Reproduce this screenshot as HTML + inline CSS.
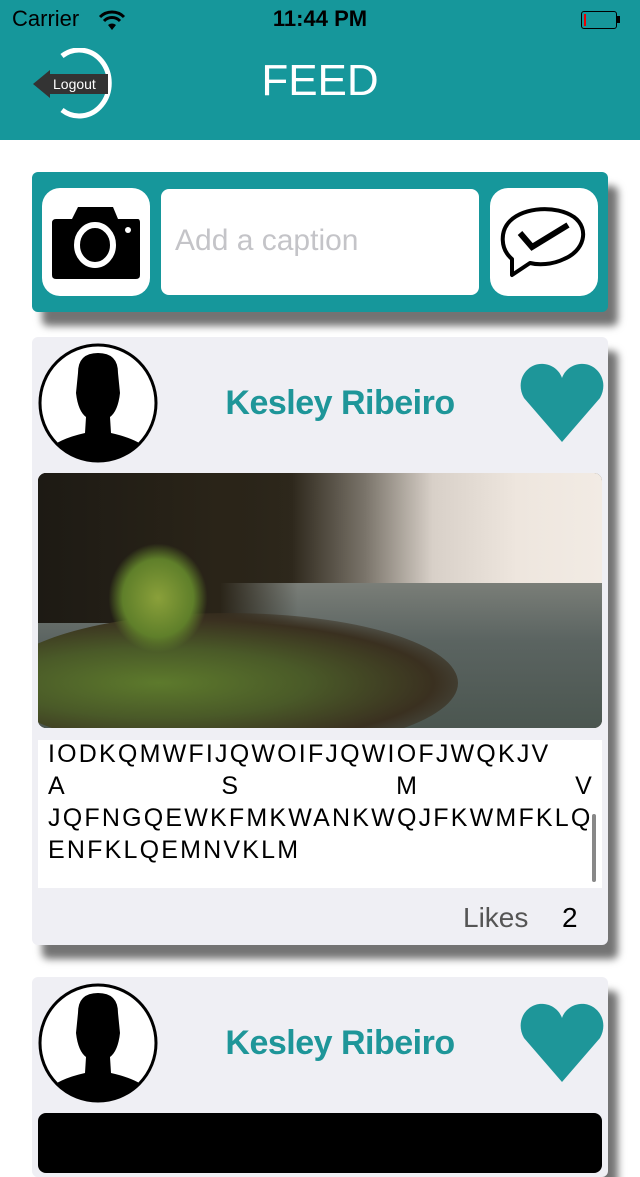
<!DOCTYPE html>
<html><head><meta charset="utf-8"><style>
body{margin:0;width:640px;height:1136px;overflow:hidden;background:#fff;font-family:"Liberation Sans",sans-serif;position:relative}
.abs{position:absolute}
.hdr{left:0;top:0;width:640px;height:140px;background:#16979b}
.card{background:#efeff4;border-radius:6px;box-shadow:10px 14px 8px rgba(0,0,0,.55)}
.name{color:#1e9699;font-weight:bold;font-size:34px;text-align:center;width:300px;letter-spacing:-0.5px}
.txt{font-size:25px;color:#000;letter-spacing:2.2px;line-height:32px}
</style></head><body>
<div class="abs hdr"></div>
<div class="abs" style="left:12px;top:6px;font-size:22px;color:#000">Carrier</div>
<svg class="abs" style="left:98px;top:9px" width="28" height="22" viewBox="0 0 28 22"><path d="M2 8 A17 17 0 0 1 26 8" stroke="#000" stroke-width="3" fill="none"/><path d="M6 12 A11 11 0 0 1 22 12" stroke="#000" stroke-width="3" fill="none"/><path d="M10 16 L14 21 L18 16 A6 6 0 0 0 10 16Z" fill="#000"/></svg>
<div class="abs" style="left:0;width:640px;top:6px;text-align:center;font-size:22px;font-weight:bold">11:44 PM</div>
<div class="abs" style="left:581px;top:11px;width:34px;height:16px;border:1.5px solid #000;border-radius:3px"><div style="width:2px;height:12px;background:#e00;margin:2px"></div></div>
<div class="abs" style="left:617px;top:16px;width:3px;height:7px;background:#000"></div>
<svg class="abs" style="left:30px;top:48px" width="92" height="72" viewBox="0 0 92 72"><path d="M32 8 A30 33 0 1 1 32 62" stroke="#fff" stroke-width="5" fill="none"/><path d="M3 36 L20 22 L20 26 L78 26 L78 46 L20 46 L20 50Z" fill="#333"/><text x="23" y="41" fill="#fff" font-size="14" font-family="Liberation Sans">Logout</text></svg>
<div class="abs" style="left:0;width:640px;top:56px;text-align:center;color:#fff;font-size:44px">FEED</div>

<div class="abs" style="left:32px;top:172px;width:576px;height:140px;background:#16979b;border-radius:6px;box-shadow:10px 14px 8px rgba(0,0,0,.55)"></div>
<div class="abs" style="left:42px;top:188px;width:108px;height:108px;background:#fff;border-radius:18px"></div>
<svg class="abs" style="left:50px;top:205px" width="92" height="75" viewBox="0 0 92 75"><path d="M4 14 H22 L28 2 H63 L68 14 H88 Q90 14 90 18 V70 Q90 74 86 74 H6 Q2 74 2 70 V18 Q2 14 6 14Z" fill="#000"/><ellipse cx="45" cy="40" rx="18" ry="20" fill="none" stroke="#fff" stroke-width="6"/><circle cx="78" cy="25" r="3" fill="#fff"/></svg>
<div class="abs" style="left:161px;top:189px;width:318px;height:106px;background:#fff;border-radius:8px"></div>
<div class="abs" style="left:175px;top:224px;font-size:30px;color:#c4c4c8">Add a caption</div>
<div class="abs" style="left:490px;top:188px;width:108px;height:108px;background:#fff;border-radius:18px"></div>
<svg class="abs" style="left:498px;top:203px" width="92" height="78" viewBox="0 0 92 78"><path d="M14 56 C2 46 2 28 12 18 C26 4 58 2 76 14 C92 26 86 48 66 56 C54 62 40 62 32 60 L14 72 Z" fill="none" stroke="#000" stroke-width="4" stroke-linejoin="round"/><path d="M22 30 L34 44 L70 22" fill="none" stroke="#000" stroke-width="6"/></svg>

<div class="abs card" style="left:32px;top:337px;width:576px;height:608px"></div>
<svg class="abs" style="left:38px;top:343px" width="122" height="122" viewBox="0 0 122 122"><defs><clipPath id="c1"><circle cx="60" cy="60" r="57"/></clipPath></defs><circle cx="60" cy="60" r="58" fill="#fff"/><g clip-path="url(#c1)"><path d="M40 30 Q40 10 60 10 Q80 10 80 30 L82 50 Q80 68 72 74 L73 90 Q100 96 112 108 L112 122 L8 122 L8 108 Q20 96 47 90 L48 74 Q40 68 38 50Z" fill="#000"/></g><circle cx="60" cy="60" r="58" fill="none" stroke="#000" stroke-width="3"/></svg>
<div class="abs name" style="left:190px;top:384px">Kesley Ribeiro</div>
<svg class="abs" style="left:520px;top:362px" width="84" height="82" viewBox="0 0 84 82"><path d="M42 80 L4 36 C-6 18 8 0 24 2 C34 3 40 10 42 16 C44 10 50 3 60 2 C76 0 90 18 80 36Z" fill="#1e9699"/></svg>
<div class="abs" style="left:38px;top:473px;width:564px;height:255px;border-radius:8px;overflow:hidden;background:#3a3424">
 <div class="abs" style="left:0;top:0;width:564px;height:140px;background:linear-gradient(90deg,#1d1a14 0%,#2e281c 45%,#7a746a 58%,#d8d0c8 70%,#eee6de 85%,#f2ebe4 100%)"></div>
 <div class="abs" style="left:0;top:110px;width:564px;height:145px;background:linear-gradient(180deg,#7a7e78 0%,#5b6461 40%,#4b5650 100%)"></div>
 <div class="abs" style="left:0;top:0;width:260px;height:150px;background:linear-gradient(90deg,#1d1a14,#2a2418 70%,rgba(40,34,24,0))"></div>
 <div class="abs" style="left:-40px;top:140px;width:460px;height:140px;border-radius:50%;background:radial-gradient(ellipse at 35% 50%,#5d7a2c 0%,#4a5a28 35%,#3a3020 65%,rgba(60,50,40,0) 85%)"></div>
 <div class="abs" style="left:70px;top:70px;width:100px;height:110px;border-radius:50%;background:radial-gradient(#8aa03a,#5f7f2a 50%,rgba(80,100,40,0) 70%)"></div>
</div>
<div class="abs" style="left:38px;top:740px;width:564px;height:148px;background:#fff"></div>
<div class="abs txt" style="left:48px;top:738px;width:546px;text-align:justify;text-align-last:justify">IODKQMWFIJQWOIFJQWIOFJWQKJV<br>A S M V</div>
<div class="abs txt" style="left:48px;top:802px;width:560px;white-space:pre">JQFNGQEWKFMKWANKWQJFKWMFKLQ
ENFKLQEMNVKLM</div>
<div class="abs" style="left:592px;top:814px;width:4px;height:68px;background:#888;border-radius:2px"></div>
<div class="abs" style="left:463px;top:902px;font-size:28px;color:#555">Likes</div>
<div class="abs" style="left:562px;top:902px;font-size:28px;color:#000">2</div>

<div class="abs card" style="left:32px;top:977px;width:576px;height:200px"></div>
<svg class="abs" style="left:38px;top:983px" width="122" height="122" viewBox="0 0 122 122"><defs><clipPath id="c2"><circle cx="60" cy="60" r="57"/></clipPath></defs><circle cx="60" cy="60" r="58" fill="#fff"/><g clip-path="url(#c2)"><path d="M40 30 Q40 10 60 10 Q80 10 80 30 L82 50 Q80 68 72 74 L73 90 Q100 96 112 108 L112 122 L8 122 L8 108 Q20 96 47 90 L48 74 Q40 68 38 50Z" fill="#000"/></g><circle cx="60" cy="60" r="58" fill="none" stroke="#000" stroke-width="3"/></svg>
<div class="abs name" style="left:190px;top:1024px">Kesley Ribeiro</div>
<svg class="abs" style="left:520px;top:1002px" width="84" height="82" viewBox="0 0 84 82"><path d="M42 80 L4 36 C-6 18 8 0 24 2 C34 3 40 10 42 16 C44 10 50 3 60 2 C76 0 90 18 80 36Z" fill="#1e9699"/></svg>
<div class="abs" style="left:38px;top:1113px;width:564px;height:60px;background:#000;border-radius:8px"></div>
</body></html>
